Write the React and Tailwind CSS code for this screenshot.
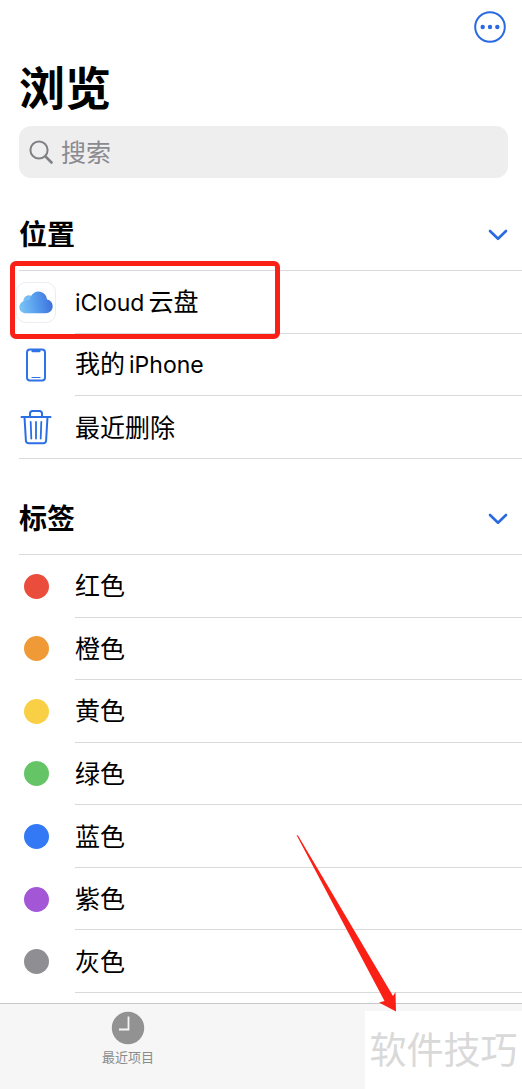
const tags = [
  { name: '红色', dot: 'bg-[#eb4d3d]' },
  { name: '橙色', dot: 'bg-[#f09a37]' },
  { name: '黄色', dot: 'bg-[#f9d045]' },
  { name: '绿色', dot: 'bg-[#65c566]' },
  { name: '蓝色', dot: 'bg-[#3379f6]' },
  { name: '紫色', dot: 'bg-[#a357d7]' },
  { name: '灰色', dot: 'bg-[#8e8e93]' },
];

function CloudIcon() {
  return (
    <span className="flex h-[41px] w-10 items-center justify-center rounded-[10px] border border-[#ececf2] bg-white">
      <svg width="34" height="23" viewBox="0 0 34 23" className="shrink-0" aria-hidden="true">
        <defs>
          <linearGradient id="cloud" x1="0" y1="0.6" x2="1" y2="0.5">
            <stop offset="0" stopColor="#7cc4f6" />
            <stop offset="0.5" stopColor="#569ded" />
            <stop offset="1" stopColor="#3f6fdc" />
          </linearGradient>
          <linearGradient id="puff" x1="0" y1="0" x2="1" y2="1">
            <stop offset="0" stopColor="#7dbdf0" />
            <stop offset="1" stopColor="#8fcff8" />
          </linearGradient>
        </defs>
        <path
          d="M7 22.300C3 22.300 .3 19.600 .3 16.200c0-3 1.700-5.200 4.200-6C4.600 6.700 7 4.600 9.800 4.600c.8 0 1.500.1 2.200.5C13.500 2.200 16.300.4 19.500.4c4.800 0 8.300 3.600 8.500 8.200 3.400.6 5.700 3.200 5.700 6.700 0 4-3 7-7 7z"
          fill="url(#cloud)"
        />
        <path
          d="M4.500 10.200C4.600 6.700 7 4.600 9.800 4.600c.8 0 1.500.1 2.200.5-.7 1.200-1 2.400-1.100 3.700-2.400.2-4.400.6-6.400 1.400z"
          fill="url(#puff)"
          opacity="0.6"
        />
      </svg>
    </span>
  );
}

function PhoneIcon() {
  return (
    <svg width="22" height="34" viewBox="0 0 22 34" fill="none" stroke="#2f73e6" aria-hidden="true">
      <rect x="2" y="1.500" width="18" height="31" rx="3" strokeWidth="2" />
      <path d="M6.500 2h9v1.200a1 1 0 0 1-1 1h-7a1 1 0 0 1-1-1z" fill="#2f73e6" stroke="none" />
      <path d="M7 29.500h8" strokeWidth="1.200" strokeLinecap="round" />
    </svg>
  );
}

function TrashIcon() {
  return (
    <svg width="32" height="36" viewBox="0 0 32 36" fill="none" stroke="#2a6fe4" strokeWidth="2" strokeLinecap="round" strokeLinejoin="round" aria-hidden="true">
      <path d="M1.500 8h29" />
      <path d="M10 8V4.500A2.500 2.500 0 0 1 12.500 2h7A2.500 2.500 0 0 1 22 4.500V8" />
      <path d="M4.500 8l1.400 23.500a3 3 0 0 0 3 2.800h14.200a3 3 0 0 0 3-2.800L27.500 8" />
      <path d="M10.700 13l.6 16.500M16 13v16.500M21.300 13l-.6 16.500" strokeWidth="1.800" />
    </svg>
  );
}

function Row({ icon, children, fullLine = false }) {
  return (
    <li className={fullLine ? 'flex border-b border-[#d9d9db]' : 'flex'}>
      <a href="#" className="flex flex-1">
        <span className="-ml-1 flex w-[42px] shrink-0 items-center justify-center">{icon}</span>
        <span
          className={
            fullLine
              ? 'ml-[18px] flex flex-1 items-center text-[25px] leading-8'
              : 'ml-[18px] flex flex-1 items-center border-b border-[#d9d9db] text-[25px] leading-8'
          }
        >
          <span className="flex items-baseline gap-1 pt-px">{children}</span>
        </span>
      </a>
    </li>
  );
}

function SectionHeader({ id, title }) {
  return (
    <div className="flex items-center justify-between pr-[14px]">
      <h2 id={id} className="text-[28px] leading-10 font-bold">{title}</h2>
      <button type="button" aria-label={`折叠${title}`}>
        <svg width="20" height="12" viewBox="0 0 20 12" fill="none" stroke="#2a6ae0" strokeWidth="2.600" strokeLinecap="round" strokeLinejoin="round" aria-hidden="true">
          <path d="M2 2l8 7.800L18 2" />
        </svg>
      </button>
    </div>
  );
}

export default function App() {
  return (
    <div className="relative flex min-h-screen flex-col bg-white font-['Inter','Noto_Sans_CJK_SC',sans-serif] text-black">
      <header className="pr-[14px] pl-[19px]">
        <div className="flex justify-end pt-[10px]">
          <button type="button" aria-label="更多" className="mr-px">
            <svg width="34" height="34" viewBox="0 0 34 34" fill="none" aria-hidden="true">
              <circle cx="17" cy="17" r="14.800" stroke="#2a6ae0" strokeWidth="2" />
              <g fill="#2a6ae0">
                <circle cx="9.700" cy="17" r="2.200" />
                <circle cx="17" cy="17" r="2.200" />
                <circle cx="24.300" cy="17" r="2.200" />
              </g>
            </svg>
          </button>
        </div>
        <h1 className="mt-3 text-[46px] leading-[64px] font-bold">浏览</h1>
        <label className="mt-[6px] flex h-[52px] items-center rounded-xl bg-[#eeeeef] pl-[10px]">
          <svg width="24" height="24" viewBox="0 0 24 24" fill="none" stroke="#808085" strokeLinecap="round" aria-hidden="true">
            <circle cx="10" cy="10" r="8.600" strokeWidth="2" />
            <path d="M16.500 16.500L22.500 22.500" strokeWidth="2.600" />
          </svg>
          <input
            type="text"
            aria-label="搜索"
            placeholder="搜索"
            className="ml-2 min-w-0 flex-1 bg-transparent pt-px text-[25px] leading-9 outline-none placeholder:text-[#8a8a8f]"
          />
        </label>
      </header>

      <main className="flex-1 pb-[10px] pl-[19px]">
        <section aria-labelledby="places" className="relative pt-[37px]">
          <SectionHeader id="places" title="位置" />
          <ul className="mt-[15px] grid min-h-[189px] auto-rows-fr border-t border-[#d9d9db]">
            <Row icon={<CloudIcon />}>
              <span className="text-[23px]">iCloud</span>
              <span>云盘</span>
            </Row>
            <Row icon={<PhoneIcon />}>
              <span>我的</span>
              <span className="text-[23px]">iPhone</span>
            </Row>
            <Row icon={<TrashIcon />} fullLine>最近删除</Row>
          </ul>
          <div className="pointer-events-none absolute top-[83px] -left-[9px] h-[78px] w-[270px] rounded-md border-[5px] border-[#fb2016]" />
        </section>

        <section aria-labelledby="tags" className="pt-10">
          <SectionHeader id="tags" title="标签" />
          <ul className="mt-[15px] grid min-h-[439px] auto-rows-fr border-t border-[#d9d9db]">
            {tags.map((tag) => (
              <Row key={tag.name} icon={<span className={`size-[25px] rounded-full ${tag.dot}`} />}>
                {tag.name}
              </Row>
            ))}
          </ul>
        </section>
      </main>

      <nav className="grid min-h-[86px] grid-cols-2 items-start border-t border-[#c8c8c8] bg-[#f6f6f6] pr-[10px]">
        <a href="#" className="flex flex-col items-center pt-[7px] text-[13px] leading-5 text-[#8a8a8a]">
          <svg width="34" height="34" viewBox="0 0 34 34" aria-hidden="true">
            <circle cx="17" cy="17" r="16.200" fill="#929292" />
            <path d="M17.500 5.500V18.500H8" fill="none" stroke="#f6f6f6" strokeWidth="1.800" />
          </svg>
          <span className="mt-[2px]">最近项目</span>
        </a>
      </nav>

      <div className="absolute right-0 bottom-0 flex h-[78px] w-[157px] items-center justify-center bg-white text-[37px] leading-none text-[#d9d9d9]">
        软件技巧
      </div>
      <svg width="102" height="178" viewBox="0 0 102 178" className="pointer-events-none absolute right-[124px] bottom-[77px]" aria-hidden="true">
        <path d="M.5 1L2 1.500 97 162 99.500 158 100 177.500 83 168.500 88.500 167z" fill="#fb2016" />
      </svg>
    </div>
  );
}
